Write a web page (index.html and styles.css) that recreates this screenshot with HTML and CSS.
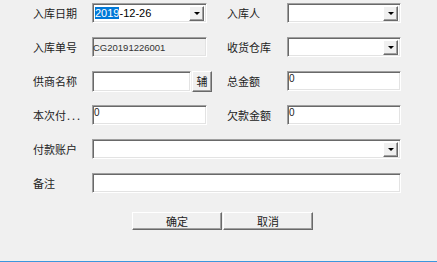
FILE: index.html
```html
<!DOCTYPE html>
<html lang="zh-CN">
<head>
    <meta charset="UTF-8">
    <meta name="viewport" content="width=device-width, initial-scale=1.0">
    <title>入库</title>
    <link rel="stylesheet" href="styles.css">
</head>
<body>
    <div class="window">
        <div class="form">
            <label class="label">入库日期</label>
            <div class="field combo">
                <span class="value"><span class="sel">2019</span>-12-26</span>
                <span class="drop"></span>
            </div>
            <label class="label right">入库人</label>
            <div class="field combo"><span class="value"></span><span class="drop"></span></div>

            <label class="label">入库单号</label>
            <div class="field disabled"><span class="value code">CG20191226001</span></div>
            <label class="label right">收货仓库</label>
            <div class="field combo"><span class="value"></span><span class="drop"></span></div>

            <label class="label">供商名称</label>
            <div class="with-btn">
                <div class="field"></div>
                <button class="btn small">辅</button>
            </div>
            <label class="label right">总金额</label>
            <div class="field top"><span class="num">0</span></div>

            <label class="label">本次付<span class="dots">...</span></label>
            <div class="field top"><span class="num">0</span></div>
            <label class="label right">欠款金额</label>
            <div class="field top"><span class="num">0</span></div>

            <label class="label">付款账户</label>
            <div class="field combo wide"><span class="value"></span><span class="drop"></span></div>

            <label class="label">备注</label>
            <div class="field wide"></div>
        </div>

        <div class="actions">
            <button class="btn">确定</button>
            <button class="btn">取消</button>
        </div>
    </div>
</body>
</html>
```

FILE: styles.css
```css
body {
    margin: 0;
    background: #f0f0f0;
    font-family: "Noto Sans CJK SC", "Liberation Sans", sans-serif;
    font-size: 11px;
    color: #222;
}
.window {
    height: 262px;
    box-sizing: border-box;
    border-bottom: 1px solid #3c96dd;
    padding: 3px 0 0 33px;
}
.form {
    display: grid;
    grid-template-columns: 59px 115px 20px 60px 114px;
    grid-auto-rows: 20px;
    row-gap: 14px;
}
.label {
    grid-column: 1;
    display: flex;
    align-items: center;
    white-space: nowrap;
    line-height: 1;
}
.label.right {
    grid-column: 4;
}
.dots {
    letter-spacing: 2px;
    padding-left: 1px;
}
.field {
    box-sizing: border-box;
    height: 20px;
    background: #fff;
    border: 1px solid;
    border-color: #a0a0a0 #fff #fff #a0a0a0;
    box-shadow: inset 1px 1px #696969, inset -1px -1px #e3e3e3;
    display: flex;
    align-items: center;
}
.field.disabled {
    background: #f0f0f0;
}
.field.wide {
    grid-column: 2 / 6;
}
.combo .value {
    flex: 1;
}
.value {
    font-family: "Liberation Sans", sans-serif;
    font-size: 11px;
    padding-left: 2px;
    white-space: nowrap;
    color: #000;
}
.value.code {
    font-size: 9.5px;
    padding-left: 0;
    color: #333;
}
.sel {
    background: #0078d7;
    color: #fff;
}
.drop {
    width: 15px;
    height: 15px;
    margin-right: 2px;
    box-sizing: border-box;
    background: #f0f0f0;
    border: 1px solid;
    border-color: #fff #696969 #696969 #fff;
    box-shadow: inset -1px -1px #a0a0a0;
    display: flex;
    align-items: center;
    justify-content: center;
}
.drop::after {
    content: "";
    border-left: 3px solid transparent;
    border-right: 3px solid transparent;
    border-top: 3px solid #000;
    margin-top: 1px;
}
.field.top {
    align-items: flex-start;
}
.num {
    font-family: "Liberation Sans", sans-serif;
    font-size: 10px;
    line-height: 1;
    padding: 2px 0 0 1px;
}
.with-btn {
    display: flex;
    width: 120px;
    height: 21px;
}
.with-btn .field {
    flex: 1;
    height: 21px;
}
.btn {
    box-sizing: border-box;
    font-family: "Noto Sans CJK SC", sans-serif;
    font-size: 11px;
    background: #f0f0f0;
    border: 1px solid;
    border-color: #fff #696969 #696969 #fff;
    box-shadow: inset -1px -1px #a0a0a0;
    padding: 0;
    line-height: 1;
    color: #222;
}
.btn.small {
    width: 20px;
    height: 21px;
    margin-left: 1px;
}
.actions {
    display: flex;
    gap: 1px;
    margin: 19px 0 0 99px;
}
.actions .btn {
    width: 90px;
    height: 18px;
}
```
